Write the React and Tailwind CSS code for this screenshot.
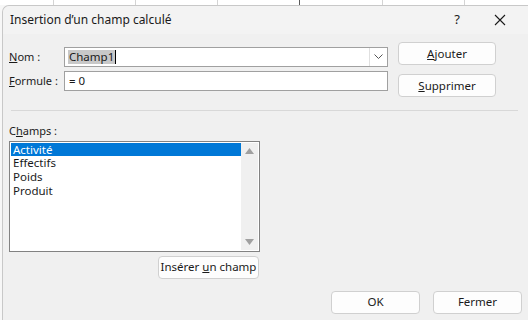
import React from 'react';

const fields = ['Activité', 'Effectifs', 'Poids', 'Produit'];

const Btn = ({ children, className = '' }) => (
  <button className={`h-[23px] bg-[#fdfdfd] border border-[#d0d0d0] rounded-[4px] text-[11.5px] text-[#1a1a1a] whitespace-nowrap flex items-center justify-center ${className}`}>
    {children}
  </button>
);

const App = () => {
  return (
    <div className="w-[528px] h-[320px] bg-[#f7f7f7] overflow-hidden font-['Noto_Sans',sans-serif] text-[#1a1a1a] flex flex-col">
      {/* Spreadsheet behind */}
      <div className="h-[5px] flex shrink-0 bg-white">
        <div className="w-[54px] border-r border-[#d4d4d4]"></div>
        <div className="w-[82px] border-r border-[#d4d4d4]"></div>
        <div className="w-[82px] border-r border-[#d4d4d4]"></div>
        <div className="w-[82px] border-r border-[#5a5a5a]"></div>
        <div className="w-[83px] border-r border-[#d4d4d4]"></div>
        <div className="w-[82px] border-r border-[#d4d4d4]"></div>
        <div className="flex-1"></div>
      </div>

      {/* Dialog */}
      <div className="flex-1 ml-[2px] bg-[#f0f0f0] border-l border-t border-[#c8c8c8] rounded-tl-[7px] flex flex-col">
        {/* Title bar */}
        <div className="h-[28px] flex items-center pl-[7px] pr-[18px] bg-[#f3f3f3] rounded-tl-[7px] shrink-0">
          <span className="text-[12px] flex-1">Insertion d’un champ calculé</span>
          <span className="text-[13px] mr-[34px]">?</span>
          <svg width="12" height="12" viewBox="0 0 12 12" className="mr-[4px]">
            <path d="M1 1 L11 11 M11 1 L1 11" stroke="#1a1a1a" strokeWidth="1.1" />
          </svg>
        </div>

        <div className="flex-1 flex flex-col px-[6px]">
          {/* Top form */}
          <div className="flex pt-[8px]">
            <div className="w-[379px] flex flex-col gap-[4px] pt-[5px]">
              <div className="flex items-center h-[20px]">
                <span className="w-[55px] text-[11px]"><u>N</u>om :</span>
                <div className="flex-1 h-[20px] bg-white border border-[#a0a0a0] flex items-center">
                  <span className="ml-[3px] text-[11.5px] bg-[#c8c8c8] leading-[14px] px-[1px]">Champ1</span>
                  <span className="w-px h-[14px] bg-black"></span>
                  <div className="ml-auto w-[18px] h-full border-l border-[#e0e0e0] flex items-center justify-center">
                    <svg width="9" height="6" viewBox="0 0 9 6">
                      <path d="M0.5 0.5 L4.5 4.5 L8.5 0.5" stroke="#555" strokeWidth="1" fill="none" />
                    </svg>
                  </div>
                </div>
              </div>
              <div className="flex items-center h-[20px]">
                <span className="w-[55px] text-[11px] whitespace-nowrap"><u>F</u>ormule :</span>
                <div className="flex-1 h-[20px] bg-white border border-[#a0a0a0] flex items-center">
                  <span className="ml-[4px] text-[11.5px]">= 0</span>
                </div>
              </div>
            </div>
            <div className="ml-[10px] flex flex-col gap-[9px]">
              <Btn className="w-[98px] border-[#0067c0] border-[1.5px]"><span><u>A</u>jouter</span></Btn>
              <Btn className="w-[98px]"><span><u>S</u>upprimer</span></Btn>
            </div>
          </div>

          {/* Separator */}
          <div className="mt-[13px] ml-[2px] mr-[4px] border-t border-[#d8d8d8]"></div>

          {/* Champs */}
          <div className="mt-[12px] text-[11px]">C<u>h</u>amps :</div>
          <div className="mt-[1px] w-[251px] h-[111px] bg-white border border-[#828282] flex p-[1px]">
            <div className="flex-1 flex flex-col text-[11.5px] leading-[13.7px]">
              {fields.map((f, i) => (
                <div key={f} className={`pl-[2px] ${i === 0 ? 'bg-[#0078d7] text-white' : ''}`}>{f}</div>
              ))}
            </div>
            <div className="w-[17px] bg-[#f0f0f0] flex flex-col items-center justify-between py-[5px]">
              <svg width="9" height="6" viewBox="0 0 9 6"><path d="M4.5 0 L9 6 L0 6 Z" fill="#a0a0a0" /></svg>
              <svg width="9" height="6" viewBox="0 0 9 6"><path d="M0 0 L9 0 L4.5 6 Z" fill="#a0a0a0" /></svg>
            </div>
          </div>
          <div className="ml-[149px] mt-[4px]">
            <Btn className="w-[101px]"><span>Insérer <u>u</u>n champ</span></Btn>
          </div>

          {/* Bottom buttons */}
          <div className="flex justify-end gap-[13px] mt-[12px]">
            <Btn className="w-[89px]">OK</Btn>
            <Btn className="w-[89px]">Fermer</Btn>
          </div>
        </div>
      </div>
    </div>
  );
};

export default App;
